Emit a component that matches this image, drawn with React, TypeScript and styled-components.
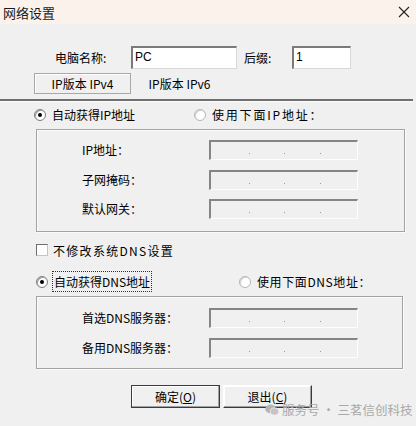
import React from "react";
import styled, { createGlobalStyle } from "styled-components";

const Global = createGlobalStyle`
  html, body { margin: 0; padding: 0; background: #f0f0f0; }
  body { font-family: "Noto Sans CJK SC", "Liberation Sans", sans-serif; font-size: 12px; color: #000; }
`;

const Window = styled.div`
  width: 416px;
  height: 426px;
  background: #f0f0f0;
  position: relative;
  overflow: hidden;
  display: flex;
  flex-direction: column;
`;

const TitleBar = styled.div`
  height: 24px;
  background: #fbf2ec;
  display: flex;
  align-items: center;
  justify-content: space-between;
  padding: 0 6px 0 3px;
  font-size: 13px;
  color: #1a1a1a;
`;

const CloseX = styled.svg`
  width: 12px;
  height: 12px;
`;

const NameRow = styled.div`
  margin-top: 22px;
  height: 23px;
  display: flex;
  align-items: center;
  padding-left: 55px;
`;

const Label = styled.span<{ $w?: number; $pl?: number }>`
  width: ${(p) => (p.$w ? `${p.$w}px` : "auto")};
  padding-left: ${(p) => p.$pl ?? 0}px;
  box-sizing: border-box;
  white-space: nowrap;
  line-height: 16px;
`;

const TextInput = styled.div<{ $w: number }>`
  width: ${(p) => p.$w}px;
  height: 23px;
  box-sizing: border-box;
  background: #fff;
  border-top: 2px solid #7a7a7a;
  border-left: 2px solid #7a7a7a;
  border-right: 1px solid #d8d8d8;
  border-bottom: 1px solid #d8d8d8;
  padding: 0 2px;
  font-family: "Liberation Sans", sans-serif;
  font-size: 12px;
  line-height: 18px;
`;

const TabsRow = styled.div`
  margin-top: 4px;
  height: 21px;
  display: flex;
  padding-left: 34px;
`;

const Tab = styled.div<{ $active?: boolean }>`
  width: 97px;
  box-sizing: border-box;
  display: flex;
  align-items: center;
  justify-content: center;
  white-space: nowrap;
  border: 1px solid ${(p) => (p.$active ? "#a8a8a8" : "transparent")};
  box-shadow: ${(p) => (p.$active ? "inset 1px 1px 0 #fff" : "none")};
`;

const Separator = styled.div`
  margin-top: 5px;
  width: 413px;
  height: 2px;
  background: #6e6e6e;
  border-bottom: 1px solid #fdfdfd;
`;

const OptionRow = styled.div<{ $mt: number; $secondX: number }>`
  margin-top: ${(p) => p.$mt}px;
  height: 16px;
  display: grid;
  grid-template-columns: ${(p) => p.$secondX}px auto;
  align-items: center;
`;

const Option = styled.label<{ $pl: number; $ls?: number }>`
  display: flex;
  align-items: center;
  padding-left: ${(p) => p.$pl}px;
  white-space: nowrap;
  letter-spacing: ${(p) => p.$ls ?? 0}px;
`;

const Radio = styled.span<{ $checked?: boolean }>`
  width: 12px;
  height: 12px;
  box-sizing: border-box;
  border-radius: 50%;
  background: #fff;
  border: 1px solid ${(p) => (p.$checked ? "#7d7d7d" : "#b5b5b5")};
  box-shadow: inset 1px 1px 0 ${(p) => (p.$checked ? "#a0a0a0" : "#d4d4d4")};
  margin-right: 6px;
  display: flex;
  align-items: center;
  justify-content: center;
  flex: none;
  &::after {
    content: "";
    width: 4px;
    height: 4px;
    border-radius: 50%;
    background: ${(p) => (p.$checked ? "#000" : "transparent")};
  }
`;

const Focus = styled.span`
  outline: 1px dotted #333;
  outline-offset: 1px;
  letter-spacing: 0;
`;

const CheckRow = styled.label`
  margin-top: 10px;
  height: 16px;
  display: flex;
  align-items: center;
  padding-left: 36px;
  letter-spacing: 1.3px;
`;

const CheckBox = styled.span`
  width: 12px;
  height: 12px;
  box-sizing: border-box;
  background: #fff;
  border-top: 1px solid #6e6e6e;
  border-left: 1px solid #6e6e6e;
  border-right: 1px solid #c4c4c4;
  border-bottom: 1px solid #c4c4c4;
  margin-right: 5px;
  flex: none;
`;

const GroupBox = styled.div<{ $mt: number; $w: number; $pt: number; $pb: number }>`
  margin: ${(p) => p.$mt}px 0 0 36px;
  width: ${(p) => p.$w}px;
  box-sizing: border-box;
  border: 1px solid #a3a3a3;
  box-shadow: inset 1px 1px 0 #fbfbfb, 1px 1px 0 #fbfbfb;
  padding: ${(p) => p.$pt}px 0 ${(p) => p.$pb}px 45px;
  display: grid;
  grid-template-columns: 127px 149px;
  row-gap: 9.5px;
  align-items: center;
`;

const IpInput = styled.div`
  width: 149px;
  height: 20px;
  box-sizing: border-box;
  background: #f0f0f0;
  border-top: 2px solid #858585;
  border-left: 2px solid #858585;
  border-right: 1px solid #fdfdfd;
  border-bottom: 1px solid #fdfdfd;
  display: grid;
  grid-template-columns: repeat(4, 1fr);
  padding: 0 2px;
`;

const IpDot = styled.span`
  position: relative;
  &::after {
    content: "";
    position: absolute;
    right: -1px;
    top: 11px;
    width: 1px;
    height: 1px;
    background: #9a9a9a;
  }
`;

const ButtonRow = styled.div`
  margin-top: 16px;
  display: flex;
  gap: 3px;
  padding-left: 131px;
`;

const Button = styled.div<{ $default?: boolean }>`
  width: 89px;
  height: 23px;
  box-sizing: border-box;
  background: #f0f0f0;
  border: 1px solid ${(p) => (p.$default ? "#3c3c3c" : "#f0f0f0")};
  border-top-color: ${(p) => (p.$default ? "#3c3c3c" : "#fff")};
  border-left-color: ${(p) => (p.$default ? "#3c3c3c" : "#fff")};
  border-right-color: #3c3c3c;
  border-bottom-color: #3c3c3c;
  box-shadow: inset -1px -1px 0 #a0a0a0, inset 1px 1px 0 #fff;
  display: flex;
  align-items: center;
  justify-content: center;
  u { text-decoration: underline; }
`;

const Watermark = styled.div`
  position: absolute;
  left: 265px;
  top: 403px;
  display: flex;
  align-items: center;
  gap: 3px;
  color: #a9a9a9;
  font-size: 12.5px;
  line-height: 14px;
  white-space: nowrap;
`;

const Ip = () => (
  <IpInput>
    <IpDot />
    <IpDot />
    <IpDot />
    <span />
  </IpInput>
);

export default function App() {
  return (
    <>
      <Global />
      <Window>
        <TitleBar>
          <span>网络设置</span>
          <CloseX viewBox="0 0 12 12">
            <path d="M1 1L11 11M11 1L1 11" stroke="#222" strokeWidth="1.1" fill="none" />
          </CloseX>
        </TitleBar>

        <NameRow>
          <Label $w={76}>电脑名称:</Label>
          <TextInput $w={106}>PC</TextInput>
          <Label $w={55} $pl={7}>
            后缀:
          </Label>
          <TextInput $w={59}>1</TextInput>
        </NameRow>

        <TabsRow>
          <Tab $active>IP版本 IPv4</Tab>
          <Tab>IP版本 IPv6</Tab>
        </TabsRow>
        <Separator />

        <OptionRow $mt={4} $secondX={194}>
          <Option $pl={34}>
            <Radio $checked />
            自动获得IP地址
          </Option>
          <Option $pl={0} $ls={1.8}>
            <Radio />
            使用下面IP地址：
          </Option>
        </OptionRow>

        <GroupBox $mt={7} $w={369} $pt={10} $pb={12}>
          <Label>IP地址：</Label>
          <Ip />
          <Label>子网掩码：</Label>
          <Ip />
          <Label>默认网关：</Label>
          <Ip />
        </GroupBox>

        <CheckRow>
          <CheckBox />
          不修改系统DNS设置
        </CheckRow>

        <OptionRow $mt={15} $secondX={239}>
          <Option $pl={36}>
            <Radio $checked />
            <Focus>自动获得DNS地址</Focus>
          </Option>
          <Option $pl={0} $ls={0.6}>
            <Radio />
            使用下面DNS地址：
          </Option>
        </OptionRow>

        <GroupBox $mt={7} $w={367} $pt={11} $pb={10}>
          <Label>首选DNS服务器：</Label>
          <Ip />
          <Label>备用DNS服务器：</Label>
          <Ip />
        </GroupBox>

        <ButtonRow>
          <Button $default>
            确定(<u>O</u>)
          </Button>
          <Button>
            退出(<u>C</u>)
          </Button>
        </ButtonRow>

        <Watermark>
          <svg width="14" height="12" viewBox="0 0 14 12">
            <ellipse cx="5.5" cy="5" rx="5.2" ry="4.4" fill="#b4b4b4" />
            <ellipse cx="9.5" cy="7.5" rx="4.3" ry="3.6" fill="#c4c4c4" stroke="#f0f0f0" strokeWidth="0.8" />
          </svg>
          <span>服务号 · 三茗信创科技</span>
        </Watermark>
      </Window>
    </>
  );
}
